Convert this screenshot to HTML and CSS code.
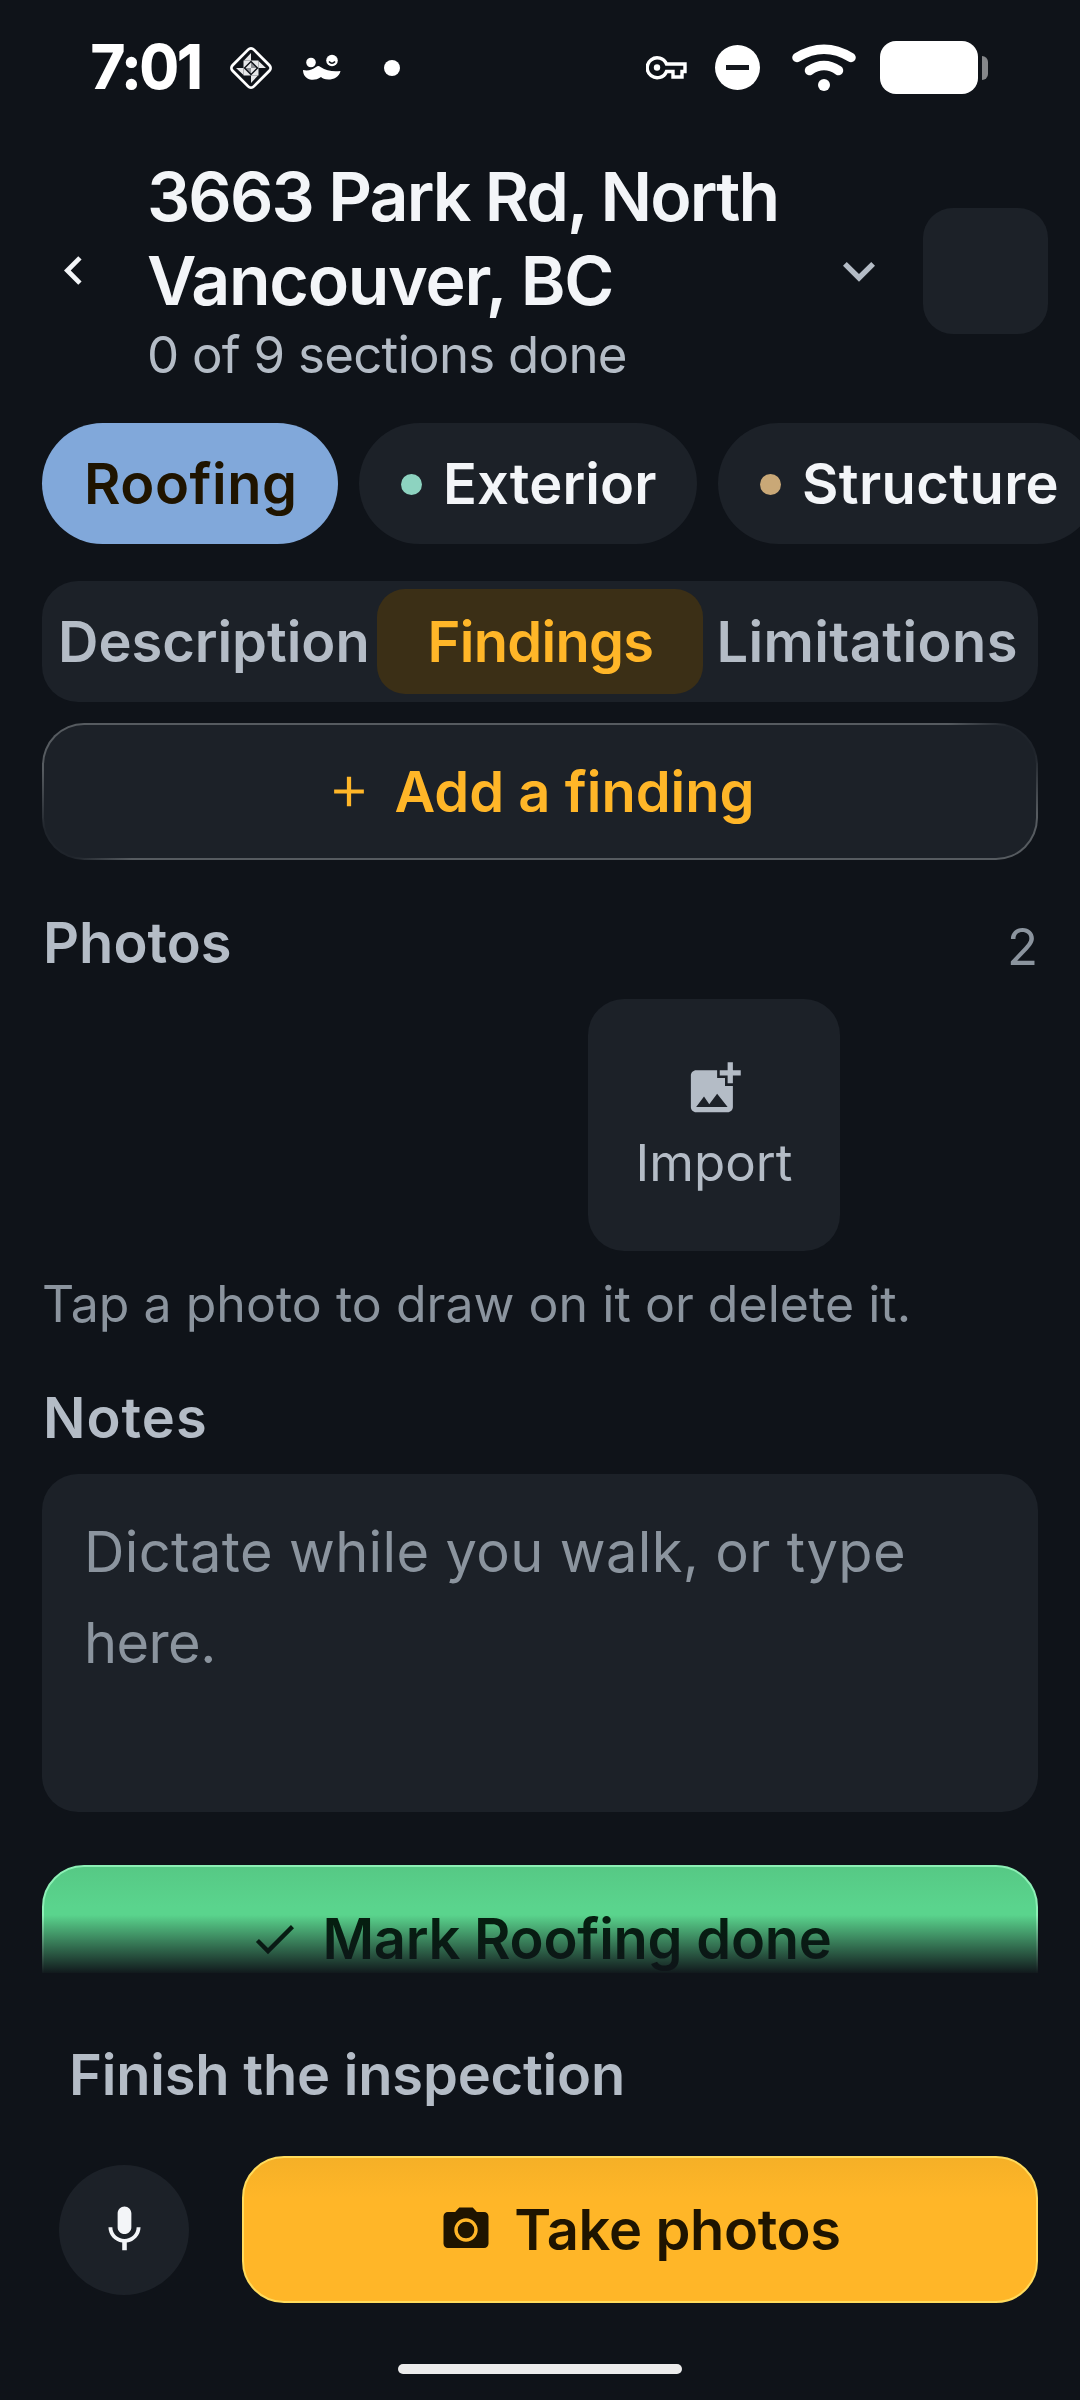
FILE: index.html
```html
<!DOCTYPE html>
<html lang="en">
<head>
<meta charset="utf-8">
<title>Inspection – Roofing</title>
<link rel="stylesheet" href="styles.css">
</head>
<body>
<div class="screen">
  <div class="status">
    <span class="clock">7:01</span>
    <svg class="st-diamond" width="46" height="46" viewBox="0 0 46 46">
      <rect x="8" y="8" width="30" height="30" rx="4" transform="rotate(45 23 23)" fill="none" stroke="#fff" stroke-width="2.800"/>
      <g fill="#e6e7e9">
        <path d="M23 8v7.500h-7zM38 23h-7.500v-7zM23 38v-7.500h7zM8 23h7.500v7z"/>
        <path d="M15.500 15.500h7.500l-7.500 7.500zM30.500 15.500v7.500l-7.500-7.500zM30.500 30.500h-7.500l7.500-7.500zM15.500 30.500v-7.500l7.500 7.500z"/>
        <path d="M23 17.500v5.500h-5.500zM23 28.500v-5.500h5.500z"/>
      </g>
      <path d="M23 17.500l5.500 5.500h-5.500zM23 28.500l-5.500-5.500h5.500z" fill="#8b8e93"/>
    </svg>
    <svg class="st-face" width="40" height="28" viewBox="0 0 40 28">
      <circle cx="9" cy="8.500" r="4.800" fill="#fff"/>
      <circle cx="30" cy="6.500" r="5.800" fill="#fff"/>
      <path d="M27 7.500q3 3.500 6 0" fill="none" stroke="#0f1319" stroke-width="1.600"/>
      <path d="M1 16c5 1 9 0 13-3 2-1.500 3-1 4.500 0 6 4 13 5 20 4-1 6-7 8.500-12 8.500-4 0-6-1-7.500-2.500-4 3-8 3-11 2.500C4 24.500 1 21 1 16z" fill="#fff"/>
    </svg>
    <span class="st-dot"></span>
    <svg class="st-key" width="42" height="26" viewBox="0 0 42 26">
      <path d="M20.500 9A10 10 0 1 0 20.500 16.500H27V22H36V16.500H39V9z" fill="none" stroke="#fff" stroke-width="3.400"/>
      <circle cx="11" cy="12.500" r="3.200" fill="#fff"/>
    </svg>
    <span class="st-dnd"></span>
    <svg class="st-wifi" width="66" height="50" viewBox="0 0 66 50" fill="none" stroke="#fff" stroke-linecap="round">
      <path d="M6 14.500Q33-2 60 14.500" stroke-width="9.500"/>
      <path d="M18.500 27.500Q33 17.500 47.500 27.500" stroke-width="9.500"/>
      <circle cx="33" cy="42" r="6" fill="#fff" stroke="none"/>
    </svg>
    <span class="battery"></span><span class="battery-tip"></span>
  </div>

  <header class="header">
    <svg class="back" width="57" height="57" viewBox="0 0 24 24" fill="#f3f5f8"><path d="M15.410 7.410L14 6l-6 6 6 6 1.410-1.410L10.830 12z"/></svg>
    <div class="heading">
      <h1 class="title"><span class="title-a">3663 Park Rd, North</span> <span class="title-b">Vancouver, BC</span></h1>
      <div class="progress">0 of 9 sections done</div>
    </div>
    <svg class="expand" width="64" height="64" viewBox="0 0 24 24" fill="#b4bcc6"><path d="M16.590 8.590L12 13.170 7.410 8.590 6 10l6 6 6-6z"/></svg>
    <div class="header-tile"></div>
  </header>

  <nav class="chips">
    <div class="chip chip-roofing">Roofing</div>
    <div class="chip chip-exterior"><i class="dot dot-teal"></i>Exterior</div>
    <div class="chip chip-structure"><i class="dot dot-tan"></i>Structure</div>
  </nav>

  <main class="content">
    <div class="tabs">
      <div class="tab">Description</div>
      <div class="tab tab-active">Findings</div>
      <div class="tab tab-limits">Limitations</div>
    </div>
    <div class="add">
      <svg width="48" height="51" viewBox="0.700 0 22.600 24" fill="#ffb628"><path d="M19 13h-6v6h-2v-6H5v-2h6V5h2v6h6v2z"/></svg>
      <span>Add a finding</span>
    </div>

    <div class="section-head"><span class="label">Photos</span><span class="count">2</span></div>
    <div class="photos">
      <div></div><div></div>
      <div class="import">
        <svg width="63" height="63" viewBox="0 0 24 24" fill="#b4bcc6"><path d="M22 7h-3v3h-2V7h-3V5h3V2h2v3h3zM19 11h-3V8h-3V5H5c-1.100 0-2 .9-2 2v12c0 1.100.9 2 2 2h12c1.100 0 2-.9 2-2zM5 19l3-4 2 3 3-4 4 5z" fill-rule="evenodd"/></svg>
        <span>Import</span>
      </div>
    </div>
    <p class="hint">Tap a photo to draw on it or delete it.</p>

    <div class="label label-notes">Notes</div>
    <div class="notes">Dictate while you walk, or type <span class="notes-end">here.</span></div>

    <div class="done">
      <svg width="53" height="52" viewBox="0 0 24 24" fill="#04200f"><path d="M9 16.170L4.830 12l-1.420 1.410L9 19 21 7l-1.410-1.410z"/></svg>
      <span>Mark Roofing done</span>
    </div>
    <div class="fade"></div>
  </main>

  <footer class="footer">
    <div class="finish">Finish the inspection</div>
    <div class="actions">
      <div class="mic">
        <svg width="55" height="55" viewBox="0 0 24 24" fill="#f3f5f8"><path d="M12 14c1.660 0 2.990-1.340 2.990-3L15 5c0-1.660-1.340-3-3-3S9 3.340 9 5v6c0 1.660 1.340 3 3 3zm5.300-3c0 3-2.540 5.100-5.300 5.100S6.700 14 6.700 11H5c0 3.410 2.720 6.230 6 6.720V21h2v-3.280c3.280-.48 6-3.300 6-6.720h-1.700z"/></svg>
      </div>
      <div class="take">
        <svg width="54" height="54" viewBox="0 0 24 24" fill="#1f1400"><circle cx="12" cy="12" r="3.700"/><path fill-rule="evenodd" d="M9 2L7.170 4H4c-1.100 0-2 .9-2 2v12c0 1.100.9 2 2 2h16c1.100 0 2-.9 2-2V6c0-1.100-.9-2-2-2h-3.170L15 2H9zm3 15.200c-2.870 0-5.200-2.330-5.200-5.200s2.330-5.200 5.200-5.200 5.200 2.330 5.200 5.200-2.330 5.200-5.200 5.200z"/></svg>
        <span>Take photos</span>
      </div>
    </div>
    <div class="home-bar"></div>
  </footer>
</div>
</body>
</html>
```
FILE: styles.css
```css
* { box-sizing: border-box; }
body {
  margin: 0;
  background: #0f1319;
  font-family: "Inter", "Liberation Sans", sans-serif;
  font-weight: 570;
  font-size: 56px;
  line-height: 70px;
  color: #f3f5f8;
}
svg { display: block; flex: none; }
.screen { width: 1080px; height: 2400px; overflow: hidden; display: flex; flex-direction: column; white-space: nowrap; }

/* status bar */
.status { height: 136px; flex: none; display: flex; align-items: center; padding: 0 0 1px 91px; }
.clock { width: 137px; font-size: 59px; font-weight: 600; letter-spacing: -1px; color: #fff; -webkit-text-stroke: 2px #fff; position: relative; top: -1px; }
.st-face { margin-left: 28px; }
.st-dot { width: 16px; height: 16px; border-radius: 50%; background: #fff; margin-left: 42px; }
.st-key { margin-left: 246px; }
.st-dnd { width: 45px; height: 45px; border-radius: 50%; margin-left: 27px; background: linear-gradient(#14181e, #14181e) center / 23px 5px no-repeat #fff; }
.st-wifi { margin-left: 31px; }
.battery { width: 98px; height: 53px; border-radius: 16px; background: #fff; margin-left: 23px; }
.battery-tip { width: 6px; height: 24px; border-radius: 0 6px 6px 0; background: #85878a; margin-left: 4px; }

/* header */
.header { display: flex; align-items: center; padding: 18px 32px 0 45px; height: 251px; flex: none; }
.heading { flex: 1; margin-left: 45px; }
.title { margin: 0; font-size: 68px; line-height: 84px; font-weight: 560; white-space: normal; }
.title-a { letter-spacing: -1.9px; }
.title-b { letter-spacing: -1.3px; }
.progress { font-size: 51px; line-height: 65px; font-weight: 400; letter-spacing: -.75px; color: #b4bcc6; }
.expand { margin-right: 32px; }
.header-tile { width: 125px; height: 126px; border-radius: 30px; background: #1c2128; }

/* section chips */
.chips { display: flex; gap: 21px; padding-left: 42px; margin-top: 36px; }
.chip { flex: none; height: 121px; border-radius: 61px; background: #1c2128; display: flex; align-items: center; padding: 1px 0 0 42px; }
.chip-roofing { width: 296px; background: #81a8da; color: #1f1400; letter-spacing: .5px; }
.chip-exterior { width: 338px; letter-spacing: .1px; }
.chip-structure { width: 380px; letter-spacing: .4px; }
.dot { width: 21px; height: 21px; border-radius: 50%; margin-right: 21px; }
.dot-teal { background: #8dd3c0; }
.dot-tan { background: #c9a877; }

/* scroll area */
.content { position: relative; height: 1392px; margin-top: 37px; padding: 0 42px; overflow: hidden; flex: none; }
.tabs { height: 121px; padding: 8px; border-radius: 36px; background: #1c2128; display: grid; grid-template-columns: repeat(3, 1fr); color: #b4bcc6; }
.tab { display: flex; align-items: center; justify-content: center; padding-left: 1px; letter-spacing: -.05px; }
.tab-active { background: #3b2f16; color: #ffb628; border-radius: 28px; letter-spacing: -.7px; }
.tab-limits { letter-spacing: .4px; }
.add, .done, .take { display: flex; align-items: center; justify-content: center; gap: 21px; border-radius: 42px; }
.add {
  height: 137px;
  margin-top: 21px;
  border: 2px solid transparent;
  background:
    linear-gradient(#1c2128, #1c2128) padding-box,
    radial-gradient(circle at 0 100%, #1f242b 30px, transparent 90px) border-box,
    radial-gradient(circle at 100% 0, #1f242b 30px, transparent 90px) border-box,
    linear-gradient(#565b60, #565b60) border-box;
  color: #ffb628;
}
.section-head { display: flex; justify-content: space-between; height: 70px; margin-top: 47px; }
.label { color: #b4bcc6; padding: 1px 0 0 1px; }
.count { font-size: 51px; font-weight: 400; line-height: 79px; color: #8b949e; }
.photos { display: grid; grid-template-columns: repeat(3, 252px); gap: 21px; margin-top: 22px; height: 252px; }
.import { border-radius: 36px; background: #1c2128; display: flex; flex-direction: column; align-items: center; padding-top: 58px; font-size: 51px; font-weight: 400; line-height: 65px; color: #b4bcc6; gap: 10px; }
.hint { margin: 20px 0 0; font-size: 50px; font-weight: 400; line-height: 66px; letter-spacing: .03px; color: #8b949e; }
.label-notes { height: 70px; margin-top: 45px; letter-spacing: 1px; }
.notes { height: 338px; margin-top: 22px; padding: 33px 42px; border-radius: 36px; background: #1c2128; font-weight: 400; line-height: 91px; letter-spacing: .35px; color: #8b949e; white-space: normal; }
.notes-end { letter-spacing: -.6px; }
.done { height: 147px; margin-top: 53px; background: linear-gradient(#56c985, #5ad48d 40px); border: 2px solid #8df0b6; color: #04200f; letter-spacing: -.25px; }
.fade { position: absolute; left: 0; right: 0; bottom: 0; height: 58px; background: linear-gradient(rgba(15, 19, 25, 0), rgba(15, 19, 25, .97)); }

/* bottom bar */
.footer { margin-top: 66px; }
.finish { height: 70px; padding: 1px 0 0 69px; color: #b4bcc6; letter-spacing: -.2px; }
.actions { display: flex; align-items: center; gap: 53px; margin-top: 47px; padding: 0 42px 0 59px; }
.mic { width: 130px; height: 130px; border-radius: 50%; background: #1c2128; display: flex; align-items: center; justify-content: center; flex: none; }
.take { flex: 1; height: 147px; background: linear-gradient(#f5b027, #ffb628 40px); border: 2px solid #ffdb5c; color: #1f1400; letter-spacing: -.35px; }
.home-bar { width: 284px; height: 10px; border-radius: 5px; background: #ececec; margin: 61px auto 0; }
```
